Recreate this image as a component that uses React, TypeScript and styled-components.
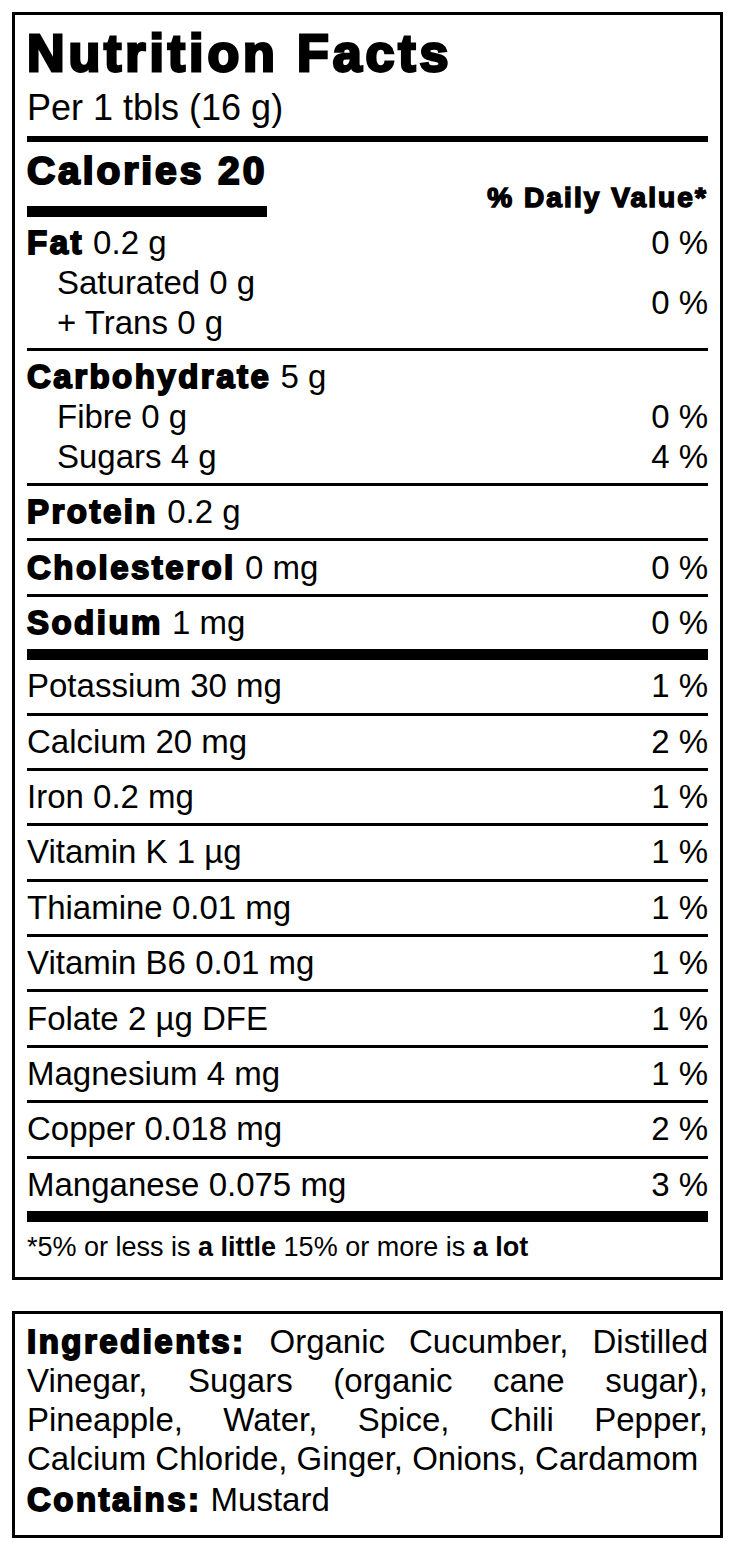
import React from "react";
import styled, { createGlobalStyle, css } from "styled-components";

const Global = createGlobalStyle`
  html, body { margin: 0; padding: 0; background: #fff; }
  body {
    font-family: "Liberation Sans", Arial, Helvetica, sans-serif;
    color: #000;
  }
`;

const heavy = css`
  font-weight: 700;
  letter-spacing: 0.075em;
  -webkit-text-stroke: 0.055em #000;
`;

const Page = styled.div`
  padding: 12px;
  display: flex;
  flex-direction: column;
  gap: 31px;
`;

const Panel = styled.section`
  border: 3px solid #000;
  padding: 13px 12px 14px;
  display: flex;
  flex-direction: column;
`;

const Title = styled.h1`
  margin: 0 0 8px;
  font-size: 52px;
  line-height: 51px;
  ${heavy};
  letter-spacing: 0.075em;
`;

const Serving = styled.div`
  font-size: 36px;
  line-height: 41px;
  margin-bottom: 8px;
`;

const Rule = styled.div<{ $h: number }>`
  height: ${(p) => p.$h}px;
  background: #000;
`;

const CaloriesRow = styled.div`
  display: flex;
  justify-content: space-between;
  align-items: flex-end;
  padding-top: 5px;
`;

const CaloriesBlock = styled.div`
  display: inline-flex;
  flex-direction: column;
`;

const CaloriesText = styled.div`
  font-size: 39px;
  line-height: 48px;
  ${heavy};
`;

const CaloriesBar = styled.div`
  height: 11px;
  margin-top: 11px;
  background: #000;
`;

const DVHeading = styled.div`
  font-size: 28px;
  line-height: 31px;
  margin-bottom: 4px;
  ${heavy};
  letter-spacing: 0.075em;
  margin-right: 0;
`;

const Group = styled.div<{ $top?: number; $bottom?: number }>`
  padding: ${(p) => p.$top ?? 6}px 0 ${(p) => p.$bottom ?? 6}px;
  font-size: 33px;
  line-height: 40px;
`;

const Row = styled.div<{ $first?: boolean }>`
  padding: 6.2px 0;
  font-size: 33px;
  line-height: 40px;
  display: flex;
  justify-content: space-between;
  border-top: ${(p) => (p.$first ? "3px solid #000" : "0")};
  & + & {
    border-top: 3px solid #000;
  }
`;

const Line = styled.div<{ $indent?: boolean }>`
  display: flex;
  justify-content: space-between;
  padding-left: ${(p) => (p.$indent ? 30 : 0)}px;
`;

const Pair = styled.div`
  display: flex;
  justify-content: space-between;
  align-items: center;
  padding-left: 30px;
`;

const Stack = styled.div`
  display: flex;
  flex-direction: column;
`;

const Name = styled.span`
  ${heavy};
`;

const Value = styled.span`
  text-align: right;
`;

const Footnote = styled.div`
  padding-top: 10px;
  font-size: 27px;
  line-height: 31px;
  b {
    font-weight: 700;
  }
`;

const IngredientsPanel = styled.section`
  border: 3px solid #000;
  padding: 8px 12px 16px;
  font-size: 33px;
  line-height: 39px;
`;

const Ingredients = styled.p`
  margin: 0;
  text-align: justify;
`;

const Contains = styled.p`
  margin: 2px 0 0;
`;

type Mineral = { name: string; amount: string; dv: string };

const minerals: Mineral[] = [
  { name: "Potassium", amount: "30 mg", dv: "1 %" },
  { name: "Calcium", amount: "20 mg", dv: "2 %" },
  { name: "Iron", amount: "0.2 mg", dv: "1 %" },
  { name: "Vitamin K", amount: "1 µg", dv: "1 %" },
  { name: "Thiamine", amount: "0.01 mg", dv: "1 %" },
  { name: "Vitamin B6", amount: "0.01 mg", dv: "1 %" },
  { name: "Folate", amount: "2 µg DFE", dv: "1 %" },
  { name: "Magnesium", amount: "4 mg", dv: "1 %" },
  { name: "Copper", amount: "0.018 mg", dv: "2 %" },
  { name: "Manganese", amount: "0.075 mg", dv: "3 %" },
];

export default function App() {
  return (
    <>
      <Global />
      <Page>
        <Panel>
          <Title>Nutrition Facts</Title>
          <Serving>Per 1 tbls (16 g)</Serving>
          <Rule $h={6} />
          <CaloriesRow>
            <CaloriesBlock>
              <CaloriesText>Calories 20</CaloriesText>
              <CaloriesBar />
            </CaloriesBlock>
            <DVHeading>% Daily Value*</DVHeading>
          </CaloriesRow>

          <Group $top={6} $bottom={5}>
            <Line>
              <span>
                <Name>Fat</Name> 0.2 g
              </span>
              <Value>0 %</Value>
            </Line>
            <Pair>
              <Stack>
                <span>Saturated 0 g</span>
                <span>+ Trans 0 g</span>
              </Stack>
              <Value>0 %</Value>
            </Pair>
          </Group>
          <Rule $h={3} />
          <Group>
            <Line>
              <span>
                <Name>Carbohydrate</Name> 5 g
              </span>
            </Line>
            <Line $indent>
              <span>Fibre 0 g</span>
              <Value>0 %</Value>
            </Line>
            <Line $indent>
              <span>Sugars 4 g</span>
              <Value>4 %</Value>
            </Line>
          </Group>
          <div>
            <Row $first>
              <span>
                <Name>Protein</Name> 0.2 g
              </span>
            </Row>
            <Row>
              <span>
                <Name>Cholesterol</Name> 0 mg
              </span>
              <Value>0 %</Value>
            </Row>
            <Row>
              <span>
                <Name>Sodium</Name> 1 mg
              </span>
              <Value>0 %</Value>
            </Row>
          </div>
          <Rule $h={11} />
          <div>
            {minerals.map((m) => (
              <Row key={m.name}>
                <span>
                  {m.name} {m.amount}
                </span>
                <Value>{m.dv}</Value>
              </Row>
            ))}
          </div>
          <Rule $h={11} />
          <Footnote>
            *5% or less is <b>a little</b> 15% or more is <b>a lot</b>
          </Footnote>
        </Panel>

        <IngredientsPanel>
          <Ingredients>
            <Name>Ingredients:</Name> Organic Cucumber, Distilled Vinegar,
            Sugars (organic cane sugar), Pineapple, Water, Spice, Chili Pepper,
            Calcium Chloride, Ginger, Onions, Cardamom
          </Ingredients>
          <Contains>
            <Name>Contains:</Name> Mustard
          </Contains>
        </IngredientsPanel>
      </Page>
    </>
  );
}
